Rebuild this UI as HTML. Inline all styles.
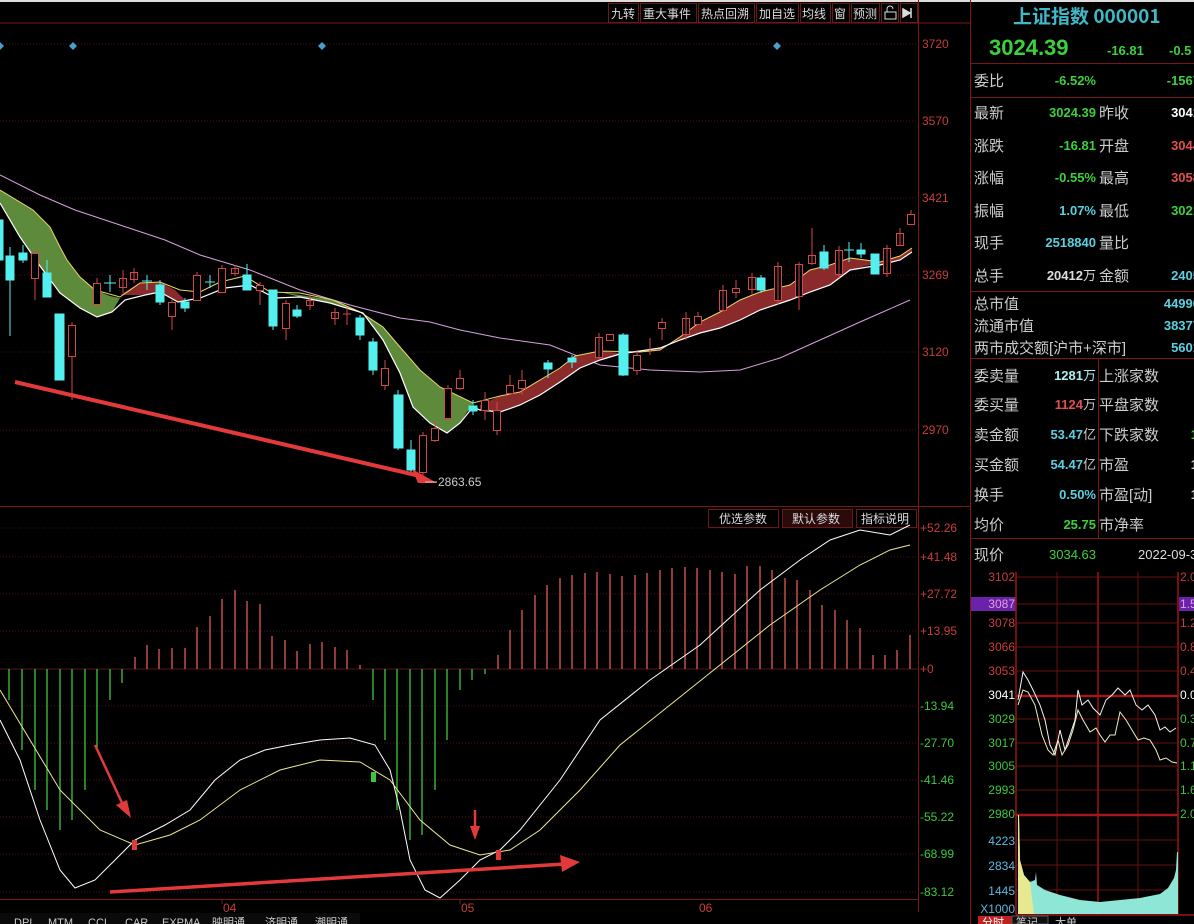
<!DOCTYPE html>
<html><head><meta charset="utf-8"><style>
html,body{margin:0;padding:0;background:#000;overflow:hidden}
svg{display:block}
text{font-family:"Liberation Sans","Noto Sans CJK SC",sans-serif}
.cn{font-family:"Noto Sans CJK SC","WenQuanYi Zen Hei",sans-serif}
</style></head><body>
<svg width="1194" height="924" viewBox="0 0 1194 924" xmlns="http://www.w3.org/2000/svg">
<rect width="1194" height="924" fill="#000"/>
<rect x="0" y="0" width="1194" height="2" fill="#ddd"/>
<g stroke="#4a1010" stroke-dasharray="1,2" stroke-width="1">
<line x1="0" y1="44" x2="918" y2="44"/><line x1="0" y1="121" x2="918" y2="121"/><line x1="0" y1="198" x2="918" y2="198"/><line x1="0" y1="275" x2="918" y2="275"/><line x1="0" y1="352" x2="918" y2="352"/><line x1="0" y1="430" x2="918" y2="430"/>
<line x1="0" y1="528" x2="918" y2="528"/><line x1="0" y1="557" x2="918" y2="557"/><line x1="0" y1="594" x2="918" y2="594"/><line x1="0" y1="631" x2="918" y2="631"/><line x1="0" y1="706" x2="918" y2="706"/><line x1="0" y1="743" x2="918" y2="743"/><line x1="0" y1="780" x2="918" y2="780"/><line x1="0" y1="817" x2="918" y2="817"/><line x1="0" y1="854" x2="918" y2="854"/><line x1="0" y1="892" x2="918" y2="892"/>
</g>
<line x1="0" y1="669" x2="918" y2="669" stroke="#5a1515"/>
<g stroke="#7a1818" stroke-width="1">
<line x1="0" y1="23" x2="970" y2="23"/>
<line x1="0" y1="506.5" x2="970" y2="506.5"/>
<line x1="0" y1="899.5" x2="918" y2="899.5"/>
<line x1="918.5" y1="0" x2="918.5" y2="912"/>
<line x1="970.5" y1="0" x2="970.5" y2="924"/>
</g>
<g class="cn" font-size="12" fill="#ddd">
<g stroke="#6a1818" fill="none"><rect x="608.5" y="3.5" width="30" height="19"/><rect x="640.5" y="3.5" width="56" height="19"/><rect x="698.5" y="3.5" width="56" height="19"/><rect x="756.5" y="3.5" width="42" height="19"/><rect x="800.5" y="3.5" width="30" height="19"/><rect x="832.5" y="3.5" width="17" height="19"/><rect x="851.5" y="3.5" width="28" height="19"/><rect x="881.5" y="3.5" width="17" height="19"/><rect x="900.5" y="3.5" width="17" height="19"/></g>
<text x="611" y="18" class="cn">九转</text><text x="643" y="18" class="cn">重大事件</text><text x="701" y="18" class="cn">热点回溯</text><text x="759" y="18" class="cn">加自选</text><text x="802" y="18" class="cn">均线</text><text x="834" y="18" class="cn">窗</text><text x="853" y="18" class="cn">预测</text>
<path d="M885 19h11v-7h-11zM887 12v-3a3 3 0 0 1 6 0" stroke="#ddd" fill="none"/>
<path d="M903 9l7 4-7 4zM911 8v10" stroke="#ddd" fill="#ddd" stroke-width="1.5"/>
</g>
<g fill="#4a9ec8"><path d="M0 42l4 4-4 4-4-4z"/><path d="M73 42l4 4-4 4-4-4z"/><path d="M322 42l4 4-4 4-4-4z"/><path d="M777 42l4 4-4 4-4-4z"/></g>
<g font-size="12" fill="#c83c3c"><text x="922" y="48">3720</text><text x="922" y="125">3570</text><text x="922" y="202">3421</text><text x="922" y="279">3269</text><text x="922" y="356">3120</text><text x="922" y="434">2970</text>
<text x="920" y="532">+52.26</text><text x="920" y="561">+41.48</text><text x="920" y="598">+27.72</text><text x="920" y="635">+13.95</text><text x="920" y="673">+0</text></g>
<g font-size="12" fill="#3cc83c"><text x="920" y="710">-13.94</text><text x="920" y="747">-27.70</text><text x="920" y="784">-41.46</text><text x="920" y="821">-55.22</text><text x="920" y="858">-68.99</text><text x="920" y="896">-83.12</text></g>
<polyline fill="none" stroke="#d7a0e0" stroke-width="1" points="0,175 40,195 75,210 120,225 165,240 200,255 250,270 300,290 350,305 400,318 430,322 460,330 500,338 550,345 600,365 650,370 700,372 740,370 780,358 820,340 860,322 910,300"/>
<polygon fill="#5e8a3c" points="0,190 33,210 50,227 60,247 67,260 80,277 95,290 110,296 120,298 112,312 97,317 80,308 60,293 40,266 20,237 0,203"/>
<polygon fill="#5e8a3c" points="280,292 333,300 360,312 383,327 400,347 420,370 440,387 473,403 460,423 447,433 430,423 413,407 400,373 383,340 363,313 330,303 300,297"/>
<polygon fill="#8a2a2a" points="120,295 140,283 160,282 175,290 185,300 178,302 160,292 140,295"/>
<polygon fill="#8a2a2a" points="480,405 500,396 520,392 540,380 560,368 575,356 600,351 620,353 640,352 660,350 680,337 700,322 720,312 740,300 760,292 790,285 810,270 830,265 850,258 870,260 880,262 900,256 912,248 912,252 900,260 880,265 870,265 850,270 830,285 810,292 790,300 760,310 740,320 720,328 700,333 680,340 660,348 640,352 620,354 600,360 580,368 560,382 540,395 520,405 500,412 480,410"/>
<polyline fill="none" stroke="#e8d860" stroke-width="1" points="0,190 33,210 50,227 60,247 67,260 80,277 95,290 120,297 140,283 160,282 180,290 200,292 220,282 245,276 270,292 300,293 333,300 360,312 383,327 400,347 420,370 440,387 473,403 500,396 520,392 540,380 560,368 575,356 600,351 640,352 660,350 680,337 700,322 720,312 740,300 760,292 790,285 810,270 830,265 850,258 880,262 900,256 912,248"/>
<polyline fill="none" stroke="#fff" stroke-width="1.2" points="0,203 20,237 40,266 60,293 80,308 97,317 112,312 125,300 145,295 160,292 178,302 200,298 225,288 250,285 275,298 300,297 330,303 363,313 383,340 400,373 413,407 430,423 447,433 460,423 473,407 480,410 500,412 520,405 540,395 560,382 580,368 600,360 620,354 660,348 680,340 700,333 720,328 740,320 760,310 790,300 810,292 830,285 850,270 880,265 900,260 912,252"/>
<g stroke="#d04848" fill="#000" stroke-width="1">
<line x1="35" y1="250" x2="35" y2="300"/><rect x="31.5" y="253.5" width="7" height="25"/>
<line x1="72" y1="322" x2="72" y2="400"/><rect x="68.5" y="325.5" width="7" height="31"/>
<line x1="97" y1="278" x2="97" y2="305"/><rect x="93.5" y="283.5" width="7" height="21"/>
<rect x="119.5" y="278.5" width="7" height="9"/><line x1="123" y1="270" x2="123" y2="293"/>
<rect x="130.5" y="272.5" width="7" height="7"/><line x1="134" y1="268" x2="134" y2="283"/>
<line x1="172" y1="300" x2="172" y2="330"/><rect x="168.5" y="302.5" width="7" height="14"/>
<line x1="197" y1="272" x2="197" y2="300"/><rect x="193.5" y="275.5" width="7" height="25"/>
<line x1="222" y1="265" x2="222" y2="292"/><rect x="218.5" y="268.5" width="7" height="24"/>
<rect x="231.5" y="268.5" width="7" height="5"/><line x1="235" y1="265" x2="235" y2="276"/>
<line x1="260" y1="282" x2="260" y2="305"/><rect x="256.5" y="285.5" width="7" height="5"/>
<line x1="286" y1="300" x2="286" y2="340"/><rect x="282.5" y="303.5" width="7" height="25"/>
<rect x="306.5" y="300.5" width="7" height="5"/><line x1="310" y1="295" x2="310" y2="310"/>
<rect x="331.5" y="312.5" width="7" height="6"/><line x1="335" y1="308" x2="335" y2="325"/>
<line x1="347" y1="308" x2="347" y2="325"/><line x1="343" y1="314" x2="351" y2="314"/>
<line x1="385" y1="360" x2="385" y2="390"/><rect x="381.5" y="368.5" width="7" height="17"/>
<line x1="423" y1="432" x2="423" y2="482"/><rect x="419.5" y="435.5" width="7" height="37"/>
<line x1="435" y1="420" x2="435" y2="442"/><rect x="431.5" y="428.5" width="7" height="12"/>
<line x1="448" y1="385" x2="448" y2="420"/><rect x="444.5" y="388.5" width="7" height="30"/>
<line x1="460" y1="370" x2="460" y2="390"/><rect x="456.5" y="378.5" width="7" height="10"/>
<line x1="485" y1="392" x2="485" y2="420"/><rect x="481.5" y="400.5" width="7" height="10"/>
<line x1="497" y1="402" x2="497" y2="435"/><rect x="493.5" y="410.5" width="7" height="20"/>
<line x1="510" y1="375" x2="510" y2="395"/><rect x="506.5" y="385.5" width="7" height="8"/>
<line x1="522" y1="370" x2="522" y2="395"/><rect x="518.5" y="380.5" width="7" height="8"/>
<rect x="595.5" y="337.5" width="7" height="20"/><line x1="599" y1="333" x2="599" y2="360"/>
<line x1="610" y1="335" x2="610" y2="340"/><rect x="606.5" y="334.5" width="7" height="6"/>
<line x1="637" y1="350" x2="637" y2="375"/><rect x="633.5" y="355.5" width="7" height="15"/>
<line x1="650" y1="338" x2="650" y2="355"/>
<line x1="662" y1="318" x2="662" y2="340"/><rect x="658.5" y="322.5" width="7" height="6"/>
<rect x="682.5" y="318.5" width="7" height="16"/><line x1="686" y1="312" x2="686" y2="340"/>
<line x1="698" y1="312" x2="698" y2="325"/><rect x="694.5" y="316.5" width="7" height="8"/>
<rect x="719.5" y="290.5" width="7" height="20"/><line x1="723" y1="285" x2="723" y2="312"/>
<line x1="736" y1="280" x2="736" y2="298"/><rect x="732.5" y="288.5" width="7" height="4"/>
<rect x="748.5" y="277.5" width="7" height="12"/><line x1="752" y1="273" x2="752" y2="295"/>
<rect x="774.5" y="266.5" width="7" height="34"/><line x1="778" y1="262" x2="778" y2="305"/>
<rect x="795.5" y="264.5" width="7" height="32"/><line x1="799" y1="262" x2="799" y2="310"/>
<rect x="808.5" y="255.5" width="7" height="8"/><line x1="812" y1="228" x2="812" y2="265"/>
<rect x="835.5" y="250.5" width="7" height="24"/><line x1="839" y1="246" x2="839" y2="278"/>
<rect x="883.5" y="248.5" width="7" height="25"/><line x1="887" y1="245" x2="887" y2="277"/>
<rect x="896.5" y="233.5" width="7" height="12"/><line x1="900" y1="228" x2="900" y2="246"/>
<rect x="907.5" y="214.5" width="7" height="10"/><line x1="911" y1="210" x2="911" y2="215"/>
</g>
<g fill="#54f0f0" stroke="#54f0f0" stroke-width="1">
<rect x="0" y="220" width="3" height="40"/>
<line x1="10" y1="247" x2="10" y2="336"/><rect x="6" y="256" width="8" height="24"/>
<rect x="19" y="253" width="8" height="7"/><line x1="23" y1="245" x2="23" y2="263"/>
<line x1="47" y1="260" x2="47" y2="297"/><rect x="43" y="273" width="8" height="24"/>
<rect x="55" y="314" width="9" height="66"/>
<line x1="110" y1="275" x2="110" y2="292"/><line x1="104" y1="283" x2="116" y2="283"/>
<line x1="147" y1="275" x2="147" y2="290"/><line x1="142" y1="281" x2="152" y2="281"/>
<line x1="160" y1="280" x2="160" y2="305"/><rect x="156" y="285" width="8" height="17"/>
<line x1="185" y1="298" x2="185" y2="312"/><rect x="181" y="302" width="8" height="6"/>
<line x1="210" y1="275" x2="210" y2="288"/><line x1="205" y1="282" x2="215" y2="282"/>
<line x1="247" y1="264" x2="247" y2="290"/><rect x="243" y="275" width="8" height="15"/>
<line x1="273" y1="290" x2="273" y2="330"/><rect x="269" y="290" width="8" height="36"/>
<line x1="297" y1="305" x2="297" y2="318"/><rect x="293" y="310" width="8" height="6"/>
<line x1="360" y1="315" x2="360" y2="340"/><rect x="356" y="318" width="8" height="17"/>
<line x1="373" y1="338" x2="373" y2="375"/><rect x="369" y="342" width="8" height="28"/>
<line x1="398" y1="390" x2="398" y2="450"/><rect x="394" y="395" width="9" height="53"/>
<line x1="411" y1="440" x2="411" y2="472"/><rect x="407" y="450" width="8" height="20"/>
<line x1="473" y1="400" x2="473" y2="415"/><rect x="469" y="406" width="8" height="5"/>
<line x1="548" y1="360" x2="548" y2="378"/><rect x="544" y="363" width="8" height="6"/>
<line x1="572" y1="355" x2="572" y2="368"/><rect x="568" y="358" width="8" height="4"/>
<rect x="619" y="335" width="9" height="40"/><line x1="623" y1="333" x2="623" y2="376"/>
<line x1="761" y1="275" x2="761" y2="293"/><rect x="757" y="278" width="8" height="12"/>
<line x1="824" y1="245" x2="824" y2="270"/><rect x="820" y="252" width="8" height="16"/>
<line x1="849" y1="242" x2="849" y2="262"/><line x1="844" y1="250" x2="854" y2="250"/>
<line x1="861" y1="243" x2="861" y2="258"/><rect x="857" y="250" width="8" height="4"/>
<rect x="871" y="254" width="8" height="20"/>
</g>
<path d="M15 382 L420 476" stroke="#e23a3a" stroke-width="4" fill="none"/>
<path d="M437 483 L412 469 L418 483 Z" fill="#e23a3a"/>
<line x1="425" y1="482" x2="437" y2="482" stroke="#ccc"/>
<text x="438" y="486" font-size="12" fill="#ccc">2863.65</text>
<g class="cn" font-size="12" fill="#ddd">
<rect x="708.5" y="509.5" width="70" height="18" fill="#000" stroke="#6a1818"/><text x="719" y="523">优选参数</text>
<rect x="782.5" y="509.5" width="70" height="18" fill="#2a0a0a" stroke="#6a1818"/><text x="792" y="523">默认参数</text>
<rect x="856.5" y="509.5" width="60" height="18" fill="#000" stroke="#6a1818"/><text x="861" y="523">指标说明</text>
</g>
<g stroke="#e05a5a" stroke-width="1.3">
<line x1="135" y1="669" x2="135" y2="657"/><line x1="147" y1="669" x2="147" y2="645"/><line x1="159" y1="669" x2="159" y2="649"/><line x1="172" y1="669" x2="172" y2="648"/><line x1="185" y1="669" x2="185" y2="648"/><line x1="197" y1="669" x2="197" y2="627"/><line x1="210" y1="669" x2="210" y2="616"/><line x1="222" y1="669" x2="222" y2="599"/><line x1="235" y1="669" x2="235" y2="590"/><line x1="247" y1="669" x2="247" y2="601"/><line x1="260" y1="669" x2="260" y2="604"/><line x1="272" y1="669" x2="272" y2="636"/><line x1="285" y1="669" x2="285" y2="640"/><line x1="297" y1="669" x2="297" y2="651"/><line x1="310" y1="669" x2="310" y2="644"/><line x1="322" y1="669" x2="322" y2="642"/><line x1="335" y1="669" x2="335" y2="647"/><line x1="347" y1="669" x2="347" y2="650"/><line x1="360" y1="669" x2="360" y2="665"/>
<line x1="498" y1="669" x2="498" y2="655"/><line x1="510" y1="669" x2="510" y2="630"/><line x1="522" y1="669" x2="522" y2="610"/><line x1="535" y1="669" x2="535" y2="595"/><line x1="547" y1="669" x2="547" y2="585"/><line x1="560" y1="669" x2="560" y2="578"/><line x1="572" y1="669" x2="572" y2="575"/><line x1="585" y1="669" x2="585" y2="573"/><line x1="597" y1="669" x2="597" y2="572"/><line x1="610" y1="669" x2="610" y2="574"/><line x1="622" y1="669" x2="622" y2="576"/><line x1="635" y1="669" x2="635" y2="575"/><line x1="647" y1="669" x2="647" y2="573"/><line x1="660" y1="669" x2="660" y2="570"/><line x1="672" y1="669" x2="672" y2="568"/><line x1="685" y1="669" x2="685" y2="567"/><line x1="697" y1="669" x2="697" y2="568"/><line x1="710" y1="669" x2="710" y2="570"/><line x1="722" y1="669" x2="722" y2="572"/><line x1="735" y1="669" x2="735" y2="574"/><line x1="747" y1="669" x2="747" y2="566"/><line x1="760" y1="669" x2="760" y2="566"/><line x1="772" y1="669" x2="772" y2="570"/><line x1="785" y1="669" x2="785" y2="578"/><line x1="797" y1="669" x2="797" y2="580"/><line x1="810" y1="669" x2="810" y2="590"/><line x1="822" y1="669" x2="822" y2="605"/><line x1="835" y1="669" x2="835" y2="610"/><line x1="847" y1="669" x2="847" y2="620"/><line x1="860" y1="669" x2="860" y2="628"/><line x1="873" y1="669" x2="873" y2="655"/><line x1="885" y1="669" x2="885" y2="655"/><line x1="897" y1="669" x2="897" y2="650"/><line x1="910" y1="669" x2="910" y2="635"/>
</g>
<g stroke="#3cc83c" stroke-width="1.3">
<line x1="9" y1="669" x2="9" y2="700"/><line x1="22" y1="669" x2="22" y2="750"/><line x1="35" y1="669" x2="35" y2="790"/><line x1="47" y1="669" x2="47" y2="810"/><line x1="60" y1="669" x2="60" y2="830"/><line x1="72" y1="669" x2="72" y2="820"/><line x1="85" y1="669" x2="85" y2="790"/><line x1="97" y1="669" x2="97" y2="750"/><line x1="110" y1="669" x2="110" y2="700"/><line x1="122" y1="669" x2="122" y2="683"/>
<line x1="373" y1="669" x2="373" y2="700"/><line x1="385" y1="669" x2="385" y2="740"/><line x1="397" y1="669" x2="397" y2="810"/><line x1="410" y1="669" x2="410" y2="840"/><line x1="422" y1="669" x2="422" y2="835"/><line x1="435" y1="669" x2="435" y2="790"/><line x1="447" y1="669" x2="447" y2="740"/><line x1="460" y1="669" x2="460" y2="690"/><line x1="472" y1="669" x2="472" y2="680"/><line x1="485" y1="669" x2="485" y2="674"/>
</g>
<polyline fill="none" stroke="#fff" stroke-width="1" points="0,720 20,760 40,820 60,870 75,888 95,880 115,860 135,840 165,825 190,810 215,780 240,760 265,750 290,745 320,740 350,738 375,745 390,770 400,810 410,860 425,890 440,898 460,880 480,860 500,850 520,830 560,780 600,720 650,680 700,645 760,590 800,560 830,540 860,530 890,535 910,525"/>
<polyline fill="none" stroke="#f0e890" stroke-width="1" points="0,690 30,740 60,790 100,830 135,845 170,835 200,820 240,790 280,770 320,760 360,762 390,780 420,820 450,845 480,855 510,850 540,830 580,790 620,745 670,705 720,665 770,625 820,590 860,565 890,550 910,545"/>
<rect x="371" y="772" width="5" height="10" fill="#3cc83c"/>
<rect x="132" y="840" width="5" height="10" fill="#e23a3a"/>
<rect x="496" y="850" width="5" height="10" fill="#e23a3a"/>
<path d="M110 892 L565 864" stroke="#e23a3a" stroke-width="3.5"/>
<path d="M580 862 L560 855 L562 872 Z" fill="#e23a3a"/>
<path d="M95 745 L123 805" stroke="#e23a3a" stroke-width="2.5"/>
<path d="M131 818 L116 805 L127 800 Z" fill="#e23a3a"/>
<path d="M475 810 L475 828" stroke="#e23a3a" stroke-width="2.5"/>
<path d="M475 840 L470 826 L480 826 Z" fill="#e23a3a"/>
<g font-size="12" fill="#c83c3c"><text x="223" y="912">04</text><text x="461" y="912">05</text><text x="699" y="912">06</text></g>
<g stroke="#7a1818"><line x1="222" y1="900" x2="222" y2="904"/><line x1="460" y1="900" x2="460" y2="904"/></g>
<g font-size="11" fill="#ccc" class="cn"><rect x="0" y="913" width="360" height="11" fill="#0a0a0a"/>
<text x="14" y="926">DPI</text><text x="48" y="926">MTM</text><text x="88" y="926">CCI</text><text x="125" y="926">CAR</text><text x="162" y="926">EXPMA</text><text x="212" y="926">映明通</text><text x="265" y="926">济明通</text><text x="315" y="926">潮明通</text></g>
<text x="1013" y="23" class="cn" font-size="19" fill="#3fb8c8" font-weight="bold">上证指数 000001</text>
<text x="989" y="55" font-size="22" fill="#3cd03c" font-weight="bold" font-family="Liberation Mono">3024.39</text>
<text x="1107" y="55" font-size="13" fill="#3cd03c" font-weight="bold">-16.81</text>
<text x="1169" y="55" font-size="13" fill="#3cd03c" font-weight="bold">-0.5</text>
<g stroke="#7a1818"><line x1="971" y1="63.5" x2="1194" y2="63.5"/><line x1="971" y1="97.5" x2="1194" y2="97.5"/><line x1="971" y1="291.5" x2="1194" y2="291.5"/><line x1="971" y1="358.5" x2="1194" y2="358.5"/><line x1="971" y1="538.5" x2="1194" y2="538.5"/><line x1="1098.5" y1="358" x2="1098.5" y2="538"/></g>
<g class="cn" font-size="15" fill="#ccc">
<text x="974" y="86">委比</text>
<text x="974" y="118">最新</text><text x="1099" y="118">昨收</text>
<text x="974" y="151">涨跌</text><text x="1099" y="151">开盘</text>
<text x="974" y="183">涨幅</text><text x="1099" y="183">最高</text>
<text x="974" y="216">振幅</text><text x="1099" y="216">最低</text>
<text x="974" y="248">现手</text><text x="1099" y="248">量比</text>
<text x="974" y="281">总手</text><text x="1099" y="281">金额</text>
<text x="974" y="309">总市值</text><text x="974" y="331">流通市值</text><text x="974" y="353">两市成交额[沪市+深市]</text>
<text x="974" y="381">委卖量</text><text x="1099" y="381">上涨家数</text>
<text x="974" y="410">委买量</text><text x="1099" y="410">平盘家数</text>
<text x="974" y="440">卖金额</text><text x="1099" y="440">下跌家数</text>
<text x="974" y="470">买金额</text><text x="1099" y="470">市盈</text>
<text x="974" y="500">换手</text><text x="1099" y="500">市盈[动]</text>
<text x="974" y="530">均价</text><text x="1099" y="530">市净率</text>
<text x="974" y="560">现价</text>
</g>
<g font-size="13" font-weight="bold" text-anchor="end">
<text x="1096" y="85" fill="#3cd03c">-6.52%</text><text x="1200" y="85" fill="#3cd03c">-1567</text>
<text x="1096" y="117" fill="#3cd03c">3024.39</text><text x="1200" y="117" fill="#fff">3041</text>
<text x="1096" y="150" fill="#3cd03c">-16.81</text><text x="1200" y="150" fill="#e05050">3044</text>
<text x="1096" y="182" fill="#3cd03c">-0.55%</text><text x="1200" y="182" fill="#e05050">3058</text>
<text x="1096" y="215" fill="#5ad0e0">1.07%</text><text x="1200" y="215" fill="#3cd03c">3021</text>
<text x="1096" y="247" fill="#5ad0e0">2518840</text>
<text x="1096" y="280" fill="#ddd" font-weight="normal"><tspan font-weight="bold">20412</tspan>万</text><text x="1200" y="280" fill="#5ad0e0">2405</text>
<text x="1200" y="308" fill="#5ad0e0">44990</text><text x="1200" y="330" fill="#5ad0e0">38377</text><text x="1200" y="352" fill="#5ad0e0">5601</text>
<text x="1096" y="380" fill="#aef0f0">1281<tspan font-weight="normal" class="cn">万</tspan></text>
<text x="1096" y="409" fill="#e05050">1124<tspan font-weight="normal" fill="#ccc" class="cn">万</tspan></text>
<text x="1096" y="439" fill="#5ad0e0">53.47<tspan font-weight="normal" fill="#ccc" class="cn">亿</tspan></text>
<text x="1096" y="469" fill="#5ad0e0">54.47<tspan font-weight="normal" fill="#ccc" class="cn">亿</tspan></text>
<text x="1096" y="499" fill="#5ad0e0">0.50%</text>
<text x="1096" y="529" fill="#3cd03c">25.75</text>
<text x="1198" y="439" fill="#3cd03c">1</text><text x="1198" y="469" fill="#ccc">1</text><text x="1198" y="499" fill="#ccc">1</text>
</g>
<text x="1049" y="559" font-size="13" fill="#3cd03c">3034.63</text>
<text x="1138" y="559" font-size="13" fill="#ddd">2022-09-3</text>
<rect x="971" y="597" width="45" height="14" fill="#6a22a8"/>
<rect x="1179" y="597" width="15" height="14" fill="#6a22a8"/>
<g stroke="#6a1010" stroke-width="1">
<line x1="1016" y1="577" x2="1178" y2="577"/><line x1="1016" y1="604" x2="1178" y2="604"/><line x1="1016" y1="623" x2="1178" y2="623"/><line x1="1016" y1="647" x2="1178" y2="647"/><line x1="1016" y1="671" x2="1178" y2="671"/><line x1="1016" y1="719" x2="1178" y2="719"/><line x1="1016" y1="743" x2="1178" y2="743"/><line x1="1016" y1="766" x2="1178" y2="766"/><line x1="1016" y1="790" x2="1178" y2="790"/><line x1="1016" y1="840" x2="1178" y2="840"/><line x1="1016" y1="865" x2="1178" y2="865"/><line x1="1016" y1="890" x2="1178" y2="890"/>
<line x1="1057" y1="572" x2="1057" y2="915"/><line x1="1138" y1="572" x2="1138" y2="915"/>
</g>
<g stroke="#9a1515" stroke-width="1.5"><line x1="1016" y1="572" x2="1016" y2="915"/><line x1="1178" y1="572" x2="1178" y2="915"/><line x1="1098" y1="572" x2="1098" y2="915"/><line x1="1016" y1="915" x2="1194" y2="915"/></g>
<g stroke="#a01818" stroke-width="2.5"><line x1="1016" y1="696" x2="1178" y2="696"/><line x1="1016" y1="815" x2="1178" y2="815"/></g>
<polygon fill="#8ee6d6" points="1018,914 1018,815 1019,815 1020,860 1024,875 1030,882 1035,880 1036,872 1037,885 1045,890 1060,895 1080,900 1100,902 1120,900 1140,898 1160,894 1168,888 1174,878 1176,870 1177,852 1178,852 1178,914"/>
<polygon fill="#e8e890" points="1018,914 1018,815 1019,815 1020,860 1024,875 1030,882 1034,914"/>
<polyline fill="none" stroke="#f4f4f4" stroke-width="1" points="1018,700 1023,672 1028,680 1033,690 1040,705 1045,720 1050,745 1055,755 1060,730 1065,750 1070,735 1075,720 1078,690 1082,705 1088,700 1093,708 1100,715 1106,700 1112,695 1118,688 1125,695 1130,690 1136,705 1142,710 1148,705 1155,715 1160,730 1165,727 1170,732 1176,728"/>
<polyline fill="none" stroke="#f0f0c0" stroke-width="1" points="1018,705 1023,690 1028,692 1035,705 1042,735 1048,750 1053,755 1058,740 1062,755 1068,745 1073,730 1078,710 1083,720 1090,732 1096,728 1100,735 1105,742 1110,735 1115,735 1120,712 1126,720 1132,730 1138,740 1144,738 1150,740 1156,750 1160,760 1166,758 1172,762 1177,763"/>
<g font-size="12" text-anchor="end">
<text x="1015" y="581" fill="#c83c3c">3102</text><text x="1015" y="608" fill="#e0a0e0">3087</text><text x="1015" y="627" fill="#c83c3c">3078</text><text x="1015" y="651" fill="#c83c3c">3066</text><text x="1015" y="675" fill="#c83c3c">3053</text><text x="1015" y="699" fill="#fff">3041</text><text x="1015" y="723" fill="#3cc83c">3029</text><text x="1015" y="747" fill="#3cc83c">3017</text><text x="1015" y="770" fill="#3cc83c">3005</text><text x="1015" y="794" fill="#3cc83c">2993</text><text x="1015" y="818" fill="#3cc83c">2980</text><text x="1015" y="845" fill="#5ab8e0">4223</text><text x="1015" y="870" fill="#5ab8e0">2834</text><text x="1015" y="895" fill="#5ab8e0">1445</text><text x="1015" y="913" fill="#5ab8e0">X1000</text>
</g>
<g font-size="12" fill="#c83c3c"><text x="1180" y="581">2.0</text><text x="1180" y="608" fill="#e0a0e0">1.5</text><text x="1180" y="627">1.2</text><text x="1180" y="651">0.8</text><text x="1180" y="675">0.4</text><text x="1180" y="699" fill="#fff">0.0</text><text x="1180" y="723" fill="#3cc83c">0.3</text><text x="1180" y="747" fill="#3cc83c">0.7</text><text x="1180" y="770" fill="#3cc83c">1.1</text><text x="1180" y="794" fill="#3cc83c">1.6</text><text x="1180" y="818" fill="#3cc83c">2.0</text></g>
<rect x="978" y="916" width="34" height="8" fill="#c02020"/><text x="982" y="926" class="cn" font-size="11" fill="#fff">分时</text>
<rect x="1012" y="916" width="36" height="8" fill="#111" stroke="#555"/><text x="1016" y="926" class="cn" font-size="11" fill="#ccc">笔记</text>
<text x="1055" y="926" class="cn" font-size="11" fill="#ccc">大单</text>
</svg>
</body></html>
